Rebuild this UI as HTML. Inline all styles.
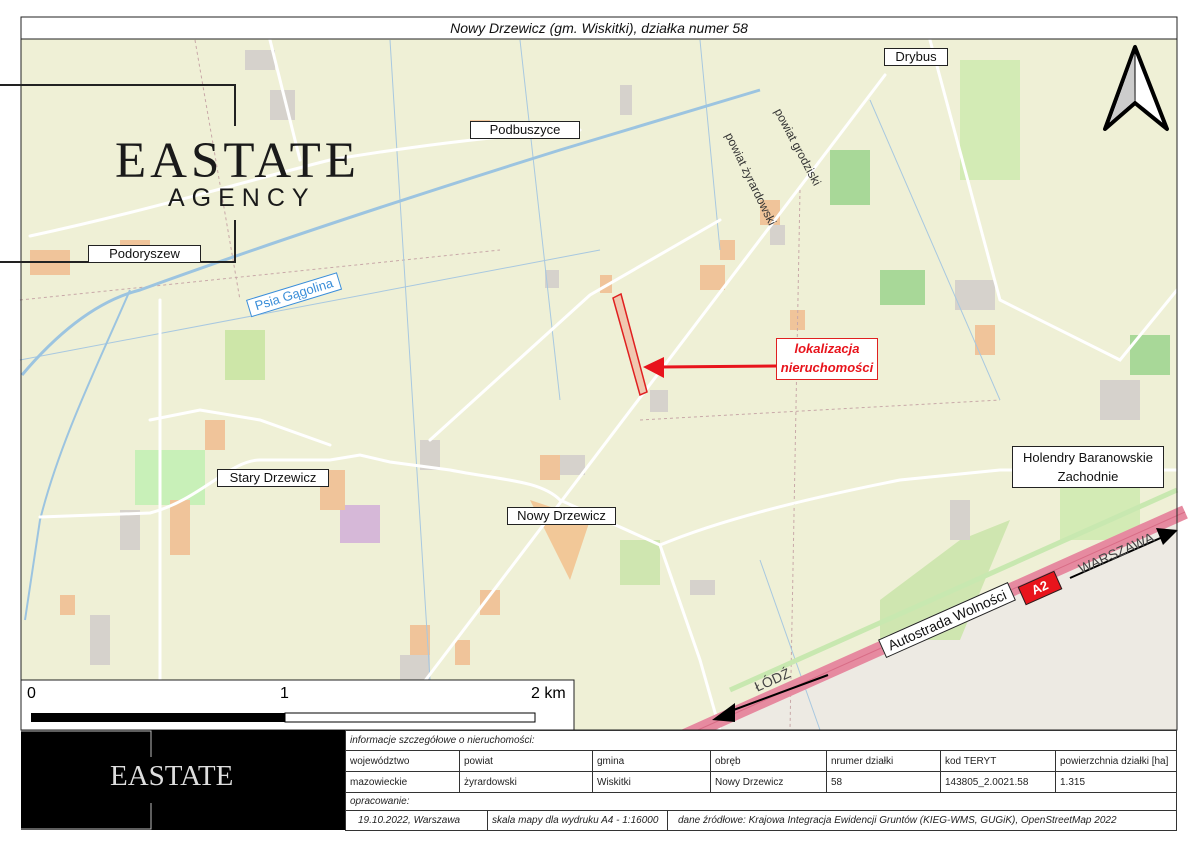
<!DOCTYPE html>
<html><head><meta charset="utf-8"><style>
body{margin:0;width:1200px;height:849px;background:#fff;position:relative;overflow:hidden;font-family:"Liberation Sans",sans-serif}
.a{position:absolute}
.lbl{position:absolute;background:#fff;border:1px solid #222;font-size:13px;color:#111;padding:0 6px;line-height:16px;white-space:nowrap}
table{border-collapse:collapse}
td{border:1px solid #333;font-size:10px;padding:0 4px;height:20px;white-space:nowrap;color:#222}
</style></head><body>
<svg class="a" style="left:0;top:0" width="1200" height="849">
<rect x="21" y="39" width="1156" height="691" fill="#eff0d6"/>
<polygon points="700,730 1177,515 1177,730" fill="#edeae3"/>
<rect x="225" y="330" width="40" height="50" fill="#cde6a8"/>
<rect x="135" y="450" width="70" height="55" fill="#c8f0b8"/>
<rect x="340" y="505" width="40" height="38" fill="#d6b8d8"/>
<polygon points="530,500 590,520 570,580" fill="#f2c898"/>
<rect x="830" y="150" width="40" height="55" fill="#a8d898"/>
<rect x="880" y="270" width="45" height="35" fill="#a8d898"/>
<rect x="1130" y="335" width="40" height="40" fill="#a8d898"/>
<polygon points="880,600 960,540 1010,520 960,640 880,640" fill="#cfe6b0"/>
<rect x="960" y="60" width="60" height="120" fill="#d3ebb5"/>
<rect x="1060" y="480" width="80" height="60" fill="#d3ebb5"/>
<rect x="620" y="540" width="40" height="45" fill="#cfe6b0"/>
<g fill="#d6d2cc">
<rect x="245" y="50" width="30" height="20"/><rect x="270" y="90" width="25" height="30"/><rect x="620" y="85" width="12" height="30"/>
<rect x="545" y="270" width="14" height="18"/><rect x="650" y="390" width="18" height="22"/><rect x="420" y="440" width="20" height="30"/>
<rect x="120" y="510" width="20" height="40"/><rect x="90" y="615" width="20" height="50"/><rect x="955" y="280" width="40" height="30"/>
<rect x="1100" y="380" width="40" height="40"/><rect x="950" y="500" width="20" height="40"/><rect x="770" y="225" width="15" height="20"/>
<rect x="690" y="580" width="25" height="15"/><rect x="400" y="655" width="30" height="25"/><rect x="560" y="455" width="25" height="20"/>
</g>
<g fill="#f0c49a">
<rect x="470" y="120" width="20" height="15"/><rect x="30" y="250" width="40" height="25"/><rect x="120" y="240" width="30" height="20"/>
<rect x="170" y="500" width="20" height="55"/><rect x="320" y="470" width="25" height="40"/><rect x="540" y="455" width="20" height="25"/>
<rect x="700" y="265" width="25" height="25"/><rect x="790" y="310" width="15" height="20"/><rect x="410" y="625" width="20" height="30"/>
<rect x="480" y="590" width="20" height="25"/><rect x="760" y="200" width="20" height="25"/><rect x="975" y="325" width="20" height="30"/>
<rect x="60" y="595" width="15" height="20"/><rect x="600" y="275" width="12" height="18"/><rect x="720" y="240" width="15" height="20"/>
<rect x="205" y="420" width="20" height="30"/><rect x="455" y="640" width="15" height="25"/>
</g>
<g stroke="#c8a8a8" stroke-width="1" stroke-dasharray="3,3" fill="none">
<line x1="195" y1="40" x2="240" y2="300"/><line x1="800" y1="190" x2="790" y2="730"/><line x1="20" y1="300" x2="500" y2="250"/><line x1="640" y1="420" x2="1000" y2="400"/>
</g>
<g stroke="#a8c8e0" stroke-width="1" fill="none">
<line x1="390" y1="40" x2="430" y2="680"/><line x1="520" y1="40" x2="560" y2="400"/><line x1="870" y1="100" x2="1000" y2="400"/><line x1="760" y1="560" x2="820" y2="730"/>
<line x1="20" y1="360" x2="600" y2="250"/><line x1="700" y1="40" x2="720" y2="250"/>
</g>
<path d="M22,375 C60,330 100,300 140,290 C250,250 400,200 560,150 L760,90" stroke="#9cc4e0" stroke-width="3" fill="none"/>
<path d="M130,290 C100,360 60,440 40,520 L25,620" stroke="#9cc4e0" stroke-width="2" fill="none"/>
<g stroke="#fff" stroke-width="3" fill="none" stroke-linecap="round">
<line x1="418" y1="690" x2="885" y2="75"/>
<path d="M30,236 C150,210 250,180 330,160 C450,140 520,135 580,130"/>
<path d="M40,517 L150,513 C200,500 230,460 260,460 L330,460 L360,455 L390,462 L450,470 C500,480 540,480 560,500 L660,545 L700,660 L720,730"/>
<path d="M150,420 L200,410 L260,420 L330,445"/>
<line x1="270" y1="40" x2="300" y2="160"/><line x1="160" y1="300" x2="160" y2="730"/>
<path d="M660,545 C720,520 800,500 900,480 L1000,470 L1177,470"/>
<path d="M720,220 L590,295 L430,440"/>
<path d="M930,40 L1000,300 L1120,360 L1177,290"/>
</g>
<line x1="680" y1="738" x2="1185" y2="512" stroke="#e68aa0" stroke-width="14"/>
<line x1="680" y1="738" x2="1185" y2="512" stroke="#d86c86" stroke-width="1"/>
<line x1="730" y1="690" x2="1177" y2="490" stroke="#c8e8b0" stroke-width="5"/>
<line x1="728" y1="712" x2="828" y2="675" stroke="#000" stroke-width="2"/>
<polygon points="712,720 735,703 735,722" fill="#000"/>
<line x1="1070" y1="578" x2="1165" y2="536" stroke="#000" stroke-width="2"/>
<polygon points="1178,530 1156,528 1163,545" fill="#000"/>
<polygon points="613,298 621,294 647,392 640,395" fill="#f0c8b0" stroke="#e02020" stroke-width="1.5"/>
<line x1="776" y1="366" x2="660" y2="367" stroke="#e8141c" stroke-width="3"/>
<polygon points="643,367 664,357 664,378" fill="#e8141c"/>
<polygon points="1135,47 1105,129 1135,103 1167,129" fill="#fff" stroke="#000" stroke-width="4" stroke-linejoin="round"/>
<polygon points="1135,52 1110,122 1134,101" fill="#ccc"/>
<line x1="1135" y1="50" x2="1135" y2="102" stroke="#000" stroke-width="1"/>
<polyline points="0,85 235,85 235,126" stroke="#222" stroke-width="2" fill="none"/>
<polyline points="0,262 235,262 235,220" stroke="#222" stroke-width="2" fill="none"/>
<rect x="21" y="17" width="1156" height="22" fill="#fff" stroke="#222"/>
<rect x="21" y="17" width="1156" height="713" fill="none" stroke="#222"/>
<rect x="21" y="680" width="553" height="50" fill="#fff" stroke="#222"/>
<rect x="31" y="713" width="254" height="9" fill="#000"/>
<rect x="285" y="713" width="250" height="9" fill="#fff" stroke="#000"/>
<rect x="21" y="730" width="324" height="100" fill="#000"/>
<polyline points="21,731 151,731 151,757" stroke="#bbb" stroke-width="1" fill="none"/>
<polyline points="21,829 151,829 151,803" stroke="#bbb" stroke-width="1" fill="none"/>
</svg>
<div class="a" style="left:21px;top:18px;width:1156px;text-align:center;font-size:14px;font-style:italic;line-height:21px;color:#111">Nowy Drzewicz (gm. Wiskitki), działka numer 58</div>
<div class="a" style="left:115px;top:133px;font-family:'Liberation Serif',serif;font-size:51px;color:#1a1a1a;letter-spacing:4px;line-height:56px">EASTATE</div>
<div class="a" style="left:168px;top:183px;font-size:25px;color:#1a1a1a;letter-spacing:7px;line-height:30px">AGENCY</div>
<div class="lbl" style="left:88px;top:245px;width:99px;text-align:center">Podoryszew</div>
<div class="lbl" style="left:470px;top:121px;width:96px;text-align:center">Podbuszyce</div>
<div class="lbl" style="left:884px;top:48px;width:50px;text-align:center">Drybus</div>
<div class="lbl" style="left:217px;top:469px;width:98px;text-align:center">Stary Drzewicz</div>
<div class="lbl" style="left:507px;top:507px;width:95px;text-align:center">Nowy Drzewicz</div>
<div class="lbl" style="left:1012px;top:446px;width:148px;text-align:center;line-height:19px;padding:1px 1px">Holendry Baranowskie<br>Zachodnie</div>
<div class="lbl" style="left:246px;top:300px;transform:rotate(-17deg);transform-origin:left top;border-color:#3b8ed8;color:#3b8ed8">Psia Gągolina</div>
<div class="a" style="left:755px;top:140px;font-size:12px;color:#333;transform:rotate(62deg);transform-origin:center;white-space:nowrap">powiat grodziski</div>
<div class="a" style="left:700px;top:172px;font-size:12px;color:#333;transform:rotate(64deg);transform-origin:center;white-space:nowrap">powiat żyrardowski</div>
<div class="a" style="left:776px;top:338px;width:100px;height:40px;background:#fff;border:1px solid #e02020;color:#e8141c;font-weight:bold;font-style:italic;font-size:13px;text-align:center;line-height:19px">lokalizacja<br>nieruchomości</div>
<div class="lbl" style="left:876px;top:610px;transform:rotate(-24deg);transform-origin:center;font-size:14px;line-height:18px">Autostrada Wolności</div>
<div class="a" style="left:1020px;top:578px;width:38px;height:18px;background:#e8141c;border:1px solid #222;color:#fff;font-weight:bold;font-size:13px;text-align:center;line-height:18px;transform:rotate(-24deg)">A2</div>
<div class="a" style="left:1076px;top:562px;font-size:14px;color:#444;transform:rotate(-24deg);transform-origin:left top">WARSZAWA</div>
<div class="a" style="left:752px;top:680px;font-size:14px;color:#444;transform:rotate(-24deg);transform-origin:left top">ŁÓDŹ</div>
<div class="a" style="left:27px;top:685px;font-size:16px">0</div>
<div class="a" style="left:280px;top:685px;font-size:16px">1</div>
<div class="a" style="left:531px;top:685px;font-size:16px">2 km</div>
<div class="a" style="left:110px;top:760px;font-family:'Liberation Serif',serif;font-size:29px;color:#ddd">EASTATE</div>
<table class="a" style="left:345px;top:730px;width:832px;background:#fff">
<tr><td colspan="7" style="font-style:italic;height:19px">informacje szczegółowe o nieruchomości:</td></tr>
<tr><td style="width:105px">województwo</td><td style="width:124px">powiat</td><td style="width:109px">gmina</td><td style="width:107px">obręb</td><td style="width:105px">nrumer działki</td><td style="width:106px">kod TERYT</td><td>powierzchnia działki [ha]</td></tr>
<tr><td>mazowieckie</td><td>żyrardowski</td><td>Wiskitki</td><td>Nowy Drzewicz</td><td>58</td><td>143805_2.0021.58</td><td>1.315</td></tr>
<tr><td colspan="7" style="font-style:italic;height:17px">opracowanie:</td></tr>
<tr><td colspan="7" style="padding:0;height:19px"><div style="display:flex;font-style:italic;font-size:10px;line-height:19px"><span style="width:129px;padding-left:12px;border-right:1px solid #333">19.10.2022, Warszawa</span><span style="width:175px;padding-left:4px;border-right:1px solid #333">skala mapy dla wydruku A4 - 1:16000</span><span style="padding-left:10px">dane źródłowe: Krajowa Integracja Ewidencji Gruntów (KIEG-WMS, GUGiK), OpenStreetMap 2022</span></div></td></tr>
</table>
</body></html>
